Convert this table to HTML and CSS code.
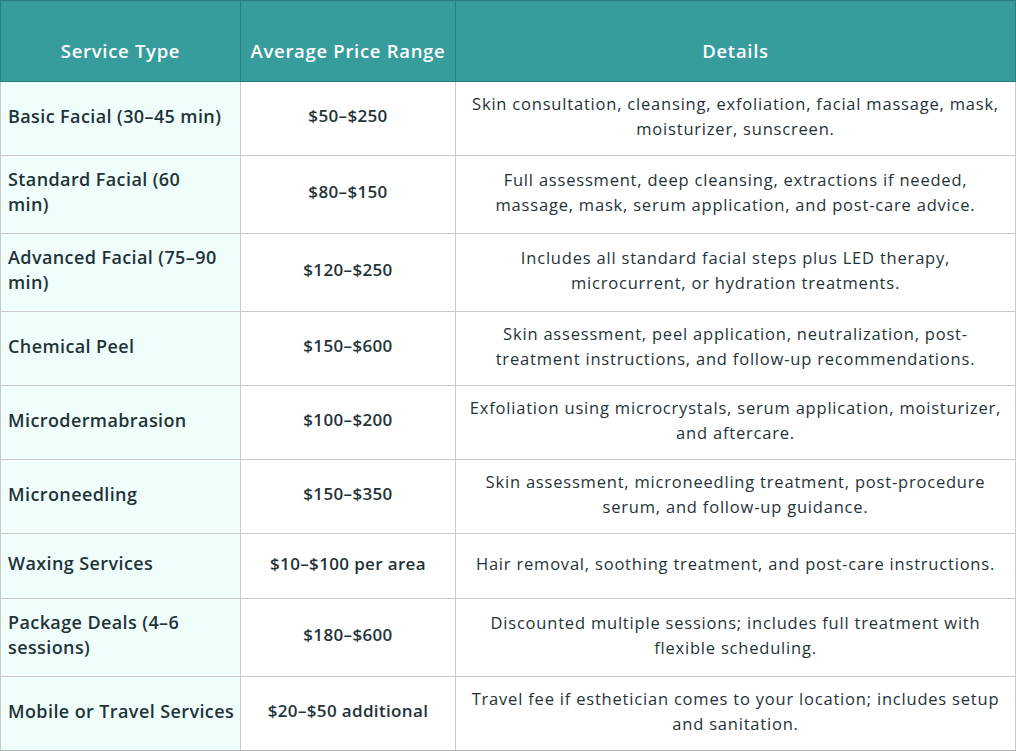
FILE: index.html
```html
<!DOCTYPE html>
<html>
<head>
<meta charset="utf-8">
<link rel="stylesheet" href="styles.css">
</head>
<body>
<table class="price-table">
  <colgroup>
    <col class="c1"><col class="c2"><col class="c3">
  </colgroup>
  <thead>
    <tr><th>Service Type</th><th>Average Price Range</th><th>Details</th></tr>
  </thead>
  <tbody>
    <tr><td class="svc">Basic Facial (30–45 min)</td><td class="price">$50–$250</td><td class="det">Skin consultation, cleansing, exfoliation, facial massage, mask, moisturizer, sunscreen.</td></tr>
    <tr><td class="svc">Standard Facial (60<br>min)</td><td class="price">$80–$150</td><td class="det">Full assessment, deep cleansing, extractions if needed, massage, mask, serum application, and post-care advice.</td></tr>
    <tr><td class="svc">Advanced Facial (75–90 min)</td><td class="price">$120–$250</td><td class="det">Includes all standard facial steps plus LED therapy, microcurrent, or hydration treatments.</td></tr>
    <tr><td class="svc">Chemical Peel</td><td class="price">$150–$600</td><td class="det">Skin assessment, peel application, neutralization, post-treatment instructions, and follow-up recommendations.</td></tr>
    <tr><td class="svc">Microdermabrasion</td><td class="price">$100–$200</td><td class="det">Exfoliation using microcrystals, serum application, moisturizer, and aftercare.</td></tr>
    <tr><td class="svc">Microneedling</td><td class="price">$150–$350</td><td class="det">Skin assessment, microneedling treatment, post-procedure serum, and follow-up guidance.</td></tr>
    <tr><td class="svc">Waxing Services</td><td class="price">$10–$100 per area</td><td class="det">Hair removal, soothing treatment, and post-care instructions.</td></tr>
    <tr><td class="svc">Package Deals (4–6 sessions)</td><td class="price">$180–$600</td><td class="det">Discounted multiple sessions; includes full treatment with flexible scheduling.</td></tr>
    <tr><td class="svc">Mobile or Travel Services</td><td class="price">$20–$50 additional</td><td class="det">Travel fee if esthetician comes to your location; includes setup and sanitation.</td></tr>
  </tbody>
</table>
</body>
</html>
```
FILE: styles.css
```css
html, body {
  margin: 0;
  padding: 0;
  background: #ffffff;
}
body {
  font-family: "Open Sans", "Liberation Sans", sans-serif;
  color: #1f3339;
}
.price-table {
  width: 1016px;
  border-collapse: collapse;
  table-layout: fixed;
}
.c1 { width: 240px; }
.c2 { width: 215px; }
.price-table th {
  background: #369c9c;
  color: #ffffff;
  font-size: 18.5px;
  font-weight: 600;
  letter-spacing: 0.7px;
  line-height: 25px;
  height: 80px;
  box-sizing: border-box;
  padding: 37px 4px 18px;
  text-align: center;
  border: 1px solid #2a7d7d;
}
.price-table tbody tr {
  height: 65px;
}
.price-table td {
  border: 1px solid #c9c9c9;
  line-height: 25px;
  vertical-align: middle;
}
.price-table tbody tr:last-child td {
  border-bottom-color: #b5b5b5;
}
.svc {
  background: #effefb;
  font-size: 18px;
  font-weight: 600;
  letter-spacing: 0.4px;
  padding: 11px 4px 16px 7px;
  text-align: left;
}
.price {
  font-size: 17px;
  font-weight: 600;
  letter-spacing: 0.35px;
  text-align: center;
  padding: 9px 4px 15px;
}
.det {
  font-size: 16.5px;
  font-weight: 400;
  letter-spacing: 0.8px;
  text-align: center;
  padding: 9px 10px 14px;
}
```
